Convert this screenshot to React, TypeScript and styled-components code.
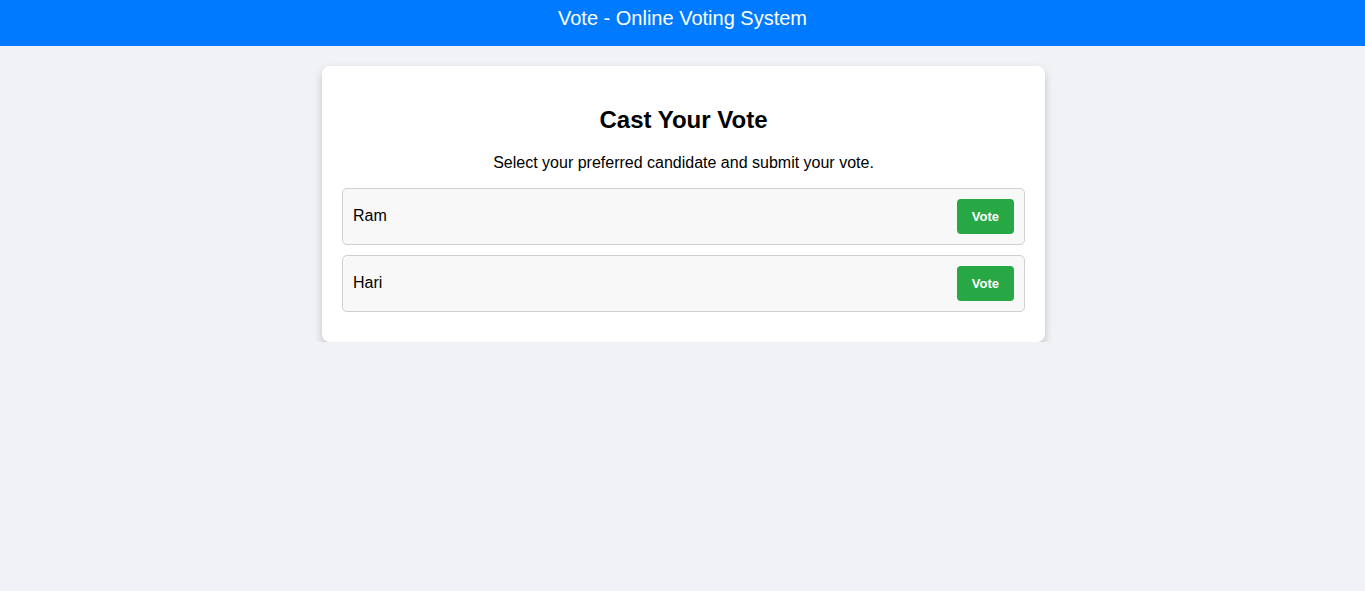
import React from "react";
import styled, { createGlobalStyle } from "styled-components";

const Global = createGlobalStyle`
  html, body { margin: 0; padding: 0; }
  body {
    background: #f0f2f5;
    font-family: "Liberation Sans", Arial, sans-serif;
    color: #000;
  }
`;

const Header = styled.header`
  background: #007bff;
  color: #fff;
  height: 46px;
  display: flex;
  justify-content: center;
  padding-top: 7px;
  box-sizing: border-box;
  font-size: 20px;
`;

const Card = styled.main`
  width: 683px;
  margin: 20px auto 0;
  padding: 20px;
  background: #fff;
  border-radius: 8px;
  box-shadow: 0 4px 8px rgba(0, 0, 0, 0.2);
  transform: translateX(1px);
`;

const Title = styled.h2`
  margin: 20px 0 0;
  font-size: 24px;
  font-weight: bold;
  text-align: center;
  line-height: 28px;
`;

const Subtitle = styled.p`
  margin: 20px 0 16px;
  font-size: 16px;
  line-height: 18px;
  text-align: center;
`;

const Candidate = styled.div`
  display: flex;
  align-items: center;
  justify-content: space-between;
  padding: 10px;
  margin-bottom: 10px;
  background: #f8f8f8;
  border: 1px solid #cfcfcf;
  border-radius: 5px;
  font-size: 16px;
`;

const Name = styled.span`
  position: relative;
  top: -1px;
`;

const VoteButton = styled.button`
  background: #28a745;
  color: #fff;
  border: none;
  border-radius: 4px;
  height: 35px;
  padding: 0 15px;
  font-family: "Liberation Sans", Arial, sans-serif;
  font-weight: bold;
  font-size: 13px;
  cursor: pointer;
`;

const candidates = ["Ram", "Hari"];

export default function App() {
  return (
    <>
      <Global />
      <Header>Vote - Online Voting System</Header>
      <Card>
        <Title>Cast Your Vote</Title>
        <Subtitle>Select your preferred candidate and submit your vote.</Subtitle>
        {candidates.map((c) => (
          <Candidate key={c}>
            <Name>{c}</Name>
            <VoteButton>Vote</VoteButton>
          </Candidate>
        ))}
      </Card>
    </>
  );
}
